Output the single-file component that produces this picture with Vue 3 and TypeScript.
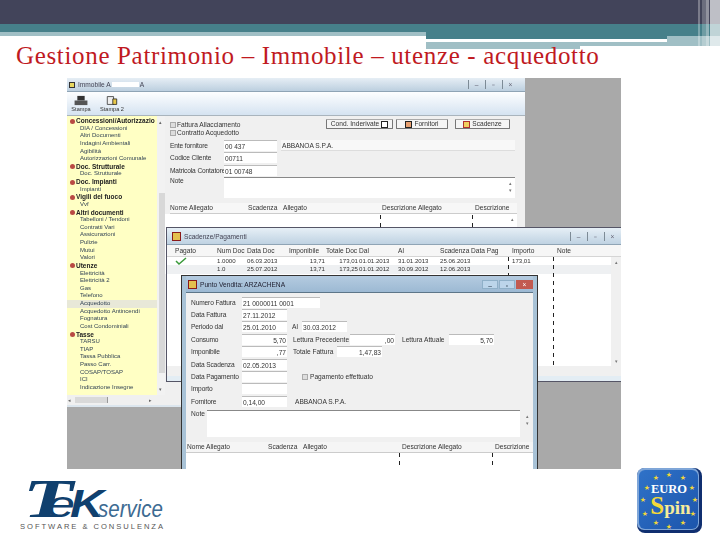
<template>
  <div class="slide">
    <header class="banner">
      <div class="band-dark"></div>
      <div class="band-left"></div>
      <div class="band-right"></div>
      <div class="white-line"></div>
      <div class="pale-a"></div>
      <div class="pale-b"></div>
      <div class="pale-c"></div>
      <div class="stripes"><i></i><i></i><i></i><i></i></div>
    </header>

    <h1 class="title">Gestione Patrimonio – Immobile – utenze - acquedotto</h1>

    <div class="shot">
      <!-- finestra principale -->
      <section class="win main-win">
        <div class="titlebar">
          <span class="lock"></span>
          <span class="t-text">Immobile A<b class="redact"></b>A</span>
          <span class="controls plain"><i>–</i><i>▫</i><i>×</i></span>
        </div>
        <div class="toolbar">
          <div class="tool">
            <svg width="16" height="12" viewBox="0 0 16 12"><path d="M4 1h8v5H4z" fill="#333" /><path d="M1 6h14v5H1z" fill="#555" /></svg>
            <span>Stampa</span>
          </div>
          <div class="tool">
            <svg width="16" height="14" viewBox="0 0 16 14"><path d="M2 2h8v10H2z" fill="#eee" stroke="#333" /><path d="M9 5h5v7H9z" fill="#e8c84a" stroke="#222" /></svg>
            <span>Stampa 2</span>
          </div>
        </div>
        <div class="main-body">
          <aside class="tree">
            <div v-for="(n, i) in tree" :key="i" :class="n.head ? 'tree-head' : 'tree-leaf'" :data-on="n.on">
              <span v-if="n.head" class="bullet"></span>{{ n.label }}
            </div>
          </aside>
          <div class="vscroll"><span>▴</span><b></b><span>▾</span></div>
          <div class="form">
            <div class="top-row">
              <div class="checks">
                <label><i class="cb"></i>Fattura Allacciamento</label>
                <label><i class="cb"></i>Contratto Acquedotto</label>
              </div>
              <div class="btns">
                <span class="btn b1">Cond. Inderivate <i class="ic ic-w"></i></span>
                <span class="btn b2"><i class="ic ic-o"></i> Fornitori</span>
                <span class="btn b3"><i class="ic ic-r"></i> Scadenze</span>
              </div>
            </div>
            <div class="frow"><span class="lbl">Ente fornitore</span><span class="inp w53">00 437</span><span class="inp grow">ABBANOA S.P.A.</span></div>
            <div class="frow"><span class="lbl">Codice Cliente</span><span class="inp w53">00711</span></div>
            <div class="frow"><span class="lbl">Matricola Contatore</span><span class="inp w53">01 00748</span></div>
            <div class="frow note"><span class="lbl">Note</span><span class="inp ta"><em>▴<br>▾</em></span></div>
            <div class="thead">
              <span class="w1">Nome Allegato</span><span class="w2">Scadenza</span><span class="w3">Allegato</span><span class="w4">Descrizione Allegato</span><span>Descrizione</span>
            </div>
            <div class="grid-white">
              <i class="dash g1"></i>
              <i class="dash g2"></i>
              <em>▴</em>
            </div>
          </div>
        </div>
        <div class="bottom-scroll"><span>◂</span><b></b><span>▸</span></div>
      </section>

      <!-- scadenze -->
      <section class="win pay-win">
        <div class="titlebar">
          <span class="ico"></span>
          <span class="t-text">Scadenze/Pagamenti</span>
          <span class="controls plain"><i>–</i><i>▫</i><i>×</i></span>
        </div>
        <div class="pay-body">
          <div class="pay-head">
            <span v-for="c in payCols" :key="c.t" :style="{ width: c.w + 'px' }">{{ c.t }}</span>
          </div>
          <div v-for="(r, i) in payRows" :key="i" class="pay-row">
            <span v-for="(c, j) in payCols" :key="c.t" :class="{ num: c.num }" :style="{ width: c.w + 'px' }">{{ r[j] }}</span>
          </div>
          <svg class="check" width="12" height="9" viewBox="0 0 12 9"><path d="M1 4l3 3 7-6" fill="none" stroke="#3a9a3a" stroke-width="1.5" /></svg>
          <i class="dash d1"></i>
          <i class="dash d2"></i>
          <div class="pay-scroll"><span>▴</span><span>▾</span></div>
        </div>
        <div class="pay-bottom"></div>
      </section>

      <!-- fattura -->
      <section class="win inv-win">
        <div class="titlebar blue">
          <span class="ico"></span>
          <span class="t-text">Punto Vendita: ARZACHENA</span>
          <span class="controls"><i class="c1">–</i><i class="c2">▫</i><i class="c3">×</i></span>
        </div>
        <div class="inv-body">
          <div class="irow"><span class="lbl">Numero Fattura</span><span class="inp w78">21 0000011 0001</span></div>
          <div class="irow"><span class="lbl">Data Fattura</span><span class="inp w45">27.11.2012</span></div>
          <div class="irow"><span class="lbl">Periodo dal</span><span class="inp w45">25.01.2010</span><span class="mid l1">Al</span><span class="inp w45">30.03.2012</span></div>
          <div class="irow"><span class="lbl">Consumo</span><span class="inp w45 r">5,70</span><span class="mid l2">Lettura Precedente</span><span class="inp w45 r">,00</span><span class="mid l3">Lettura Attuale</span><span class="inp w45 r">5,70</span></div>
          <div class="irow"><span class="lbl">Imponibile</span><span class="inp w45 r">,77</span><span class="mid l4">Totale Fattura</span><span class="inp w45 r">1,47,83</span></div>
          <div class="irow"><span class="lbl">Data Scadenza</span><span class="inp w45">02.05.2013</span></div>
          <div class="irow"><span class="lbl">Data Pagamento</span><span class="inp w45"></span><label class="mid l5"><i class="cb"></i>Pagamento effettuato</label></div>
          <div class="irow"><span class="lbl">Importo</span><span class="inp w45"></span></div>
          <div class="irow"><span class="lbl">Fornitore</span><span class="inp w45">0,14,00</span><span class="mid l6">ABBANOA S.P.A.</span></div>
          <div class="irow inote"><span class="lbl-n">Note</span><span class="inp ta"><em>▴<br>▾</em></span></div>
          <div class="thead inv-head">
            <span class="i1">Nome Allegato</span><span class="i2">Scadenza</span><span class="i3">Allegato</span><span class="i4">Descrizione Allegato</span><span>Descrizione</span>
          </div>
          <i class="dash d3"></i>
          <i class="dash d4"></i>
        </div>
      </section>
    </div>

    <footer class="logos">
      <svg class="tek" width="150" height="60" viewBox="0 0 150 60">
        <text x="6" y="41" class="tek-t" textLength="50" lengthAdjust="spacingAndGlyphs">T</text>
        <text x="30" y="41" class="tek-e" textLength="28" lengthAdjust="spacingAndGlyphs">e</text>
        <text x="53" y="41" class="tek-k" textLength="34" lengthAdjust="spacingAndGlyphs">K</text>
        <text x="81" y="41" class="tek-s" textLength="65" lengthAdjust="spacingAndGlyphs">service</text>
        <text x="3" y="53" class="tek-c" textLength="143">SOFTWARE &amp; CONSULENZA</text>
      </svg>
      <svg class="euro" width="66" height="66" viewBox="0 0 66 66">
        <defs>
          <linearGradient id="eb" x1="0" y1="0" x2="1" y2="1">
            <stop offset="0" stop-color="#2f72c8" />
            <stop offset="1" stop-color="#1c55ac" />
          </linearGradient>
        </defs>
        <rect x="0" y="0" width="65" height="65" rx="8" fill="#102f70" />
        <rect x="0" y="0" width="62" height="62" rx="7" fill="#7fa6d8" />
        <rect x="2" y="2" width="59" height="59" rx="6" fill="url(#eb)" />
        <text v-for="(s, i) in stars" :key="i" :x="s[0]" :y="s[1]" class="star">★</text>
        <text x="32" y="25" class="e-euro">EURO</text>
        <text x="33.5" y="46" class="e-spin"><tspan class="e-s">S</tspan>pin</text>
      </svg>
    </footer>
  </div>
</template>

<script setup lang="ts">
type TreeNode = { label: string; head?: boolean; on?: boolean }

const tree: TreeNode[] = [
  { label: 'Concessioni/Autorizzazio', head: true },
  { label: 'DIA / Concessioni' },
  { label: 'Altri Documenti' },
  { label: 'Indagini Ambientali' },
  { label: 'Agibilità' },
  { label: 'Autorizzazioni Comunale' },
  { label: 'Doc. Strutturale', head: true },
  { label: 'Doc. Strutturale' },
  { label: 'Doc. Impianti', head: true },
  { label: 'Impianti' },
  { label: 'Vigili del fuoco', head: true },
  { label: 'Vvf' },
  { label: 'Altri documenti', head: true },
  { label: 'Tabelloni / Tendoni' },
  { label: 'Contratti Vari' },
  { label: 'Assicurazioni' },
  { label: 'Pulizie' },
  { label: 'Mutui' },
  { label: 'Valori' },
  { label: 'Utenze', head: true },
  { label: 'Elettricità' },
  { label: 'Elettricità 2' },
  { label: 'Gas' },
  { label: 'Telefono' },
  { label: 'Acquedotto', on: true },
  { label: 'Acquedotto Antincendi' },
  { label: 'Fognatura' },
  { label: 'Cost Condominiali' },
  { label: 'Tasse', head: true },
  { label: 'TARSU' },
  { label: 'TIAP' },
  { label: 'Tassa Pubblica' },
  { label: 'Passo Carr.' },
  { label: 'COSAP/TOSAP' },
  { label: 'ICI' },
  { label: 'Indicazione Insegne' },
]

const payCols = [
  { t: 'Pagato', w: 42 },
  { t: 'Num Doc', w: 30 },
  { t: 'Data Doc', w: 42 },
  { t: 'Imponibile', w: 37, num: true },
  { t: 'Totale Doc', w: 33, num: true },
  { t: 'Dal', w: 39 },
  { t: 'Al', w: 42 },
  { t: 'Scadenza', w: 31 },
  { t: 'Data Pag', w: 41 },
  { t: 'Importo', w: 45 },
  { t: 'Note', w: 40 },
]
const payRows = [
  ['', '1.0000', '06.03.2013', '13,71', '173,01', '01.01.2013', '31.01.2013', '25.06.2013', '', '173,01', ''],
  ['', '1.0', '25.07.2012', '13,71', '173,25', '01.01.2012', '30.09.2012', '12.06.2013', '', '', ''],
]

const stars: number[][] = [
  [32, 9], [19, 12], [46, 12], [10, 22], [55, 22], [6, 34], [58, 34], [8, 48], [56, 48], [19, 57], [46, 57], [32, 61],
]
</script>

<style>
html, body { margin: 0; background: #fff; }
</style>

<style scoped>
.slide {
  width: 720px;
  height: 540px;
  position: relative;
  overflow: hidden;
  background: #fff;
  font-family: "Liberation Sans", sans-serif;
}

.banner { position: absolute; inset: 0 0 auto 0; height: 50px; }
.banner div { position: absolute; }
.band-dark { left: 0; right: 0; top: 0; height: 24px; background: #42445a; }
.band-left { left: 0; width: 426px; top: 24px; height: 12px; background: linear-gradient(#46808a 0 8px, #a0bfc5 8px); }
.band-right { left: 426px; right: 0; top: 24px; height: 15px; background: #46808a; }
.white-line { left: 426px; width: 241px; top: 39px; height: 3px; background: #fff; }
.pale-a { left: 426px; width: 154px; top: 42px; height: 7px; background: #a0bfc5; }
.pale-b { left: 580px; width: 87px; top: 42px; height: 4px; background: #a0bfc5; }
.pale-c { left: 667px; right: 0; top: 36px; height: 10px; background: #a0bfc5; }
.stripes { left: 698px; right: 0; top: 0; height: 49px; display: flex; }
.stripes i { display: block; }
.stripes i:nth-child(1) { width: 2px; background: rgba(255, 255, 255, 0.3); }
.stripes i:nth-child(2) { width: 4px; background: rgba(255, 255, 255, 0.22); margin-left: 2px; }
.stripes i:nth-child(3) { width: 3px; background: rgba(255, 255, 255, 0.42); }
.stripes i:nth-child(4) { width: 10px; background: rgba(255, 255, 255, 0.66); margin-left: 1px; }

.title {
  position: absolute;
  left: 16px;
  top: 42px;
  margin: 0;
  font: 400 25px/28px "Liberation Serif", serif;
  letter-spacing: 0.66px;
  color: #c01a1f;
  white-space: nowrap;
}

.shot {
  position: absolute;
  left: 67px;
  top: 78px;
  width: 554px;
  height: 391px;
  background: #a9a9a9;
  overflow: hidden;
  font-size: 6.6px;
  color: #333;
  filter: blur(0.3px);
}
.win { position: absolute; background: #f0f0f0; display: flex; flex-direction: column; overflow: hidden; }
.titlebar {
  display: flex;
  align-items: center;
  gap: 3px;
  flex: none;
  background: linear-gradient(#e6eef5, #bccfdf);
  border-bottom: 1px solid #8fa4b5;
  color: #445;
  box-sizing: border-box;
}
.titlebar.blue { background: linear-gradient(#b4cbe0, #9cb9d3); border-bottom: 1px solid #5d7689; }
.t-text { white-space: nowrap; }
.redact { display: inline-block; width: 27px; height: 5px; background: #fff; margin: 0 1px; }
.controls { margin-left: auto; display: flex; gap: 1px; }
.controls i { font-style: normal; width: 15px; height: 9px; line-height: 9px; text-align: center; }
.controls.plain i { border-left: 1px solid #7d8b96; color: #667; }
.controls .c1, .controls .c2 { background: #bcd5ea; color: #234; border: 1px solid #8fb0c8; box-sizing: border-box; width: 16px; }
.controls .c3 { background: #c25a50; color: #fff; width: 17px; }

.main-win { left: 0; top: 0; width: 458px; height: 329px; }
.main-win .titlebar { height: 14px; padding: 0 7px 0 2px; }
.lock { width: 6px; height: 6px; background: #e8d860; border: 1px solid #333; box-sizing: border-box; }
.toolbar {
  flex: none;
  height: 24px;
  display: flex;
  gap: 9px;
  padding: 3px 0 0 3px;
  box-sizing: border-box;
  background: linear-gradient(#fdfeff, #d5e3f1);
  border-bottom: 1px solid #a9b4bd;
}
.tool { display: flex; flex-direction: column; align-items: center; font-size: 5.6px; line-height: 6px; width: 22px; white-space: nowrap; }
.tool svg { height: 11px; }

.main-body { flex: 1; display: flex; min-height: 0; }
.tree {
  width: 90px;
  flex: none;
  background: #ffffc4;
  padding: 1px 0 0 3px;
  box-sizing: border-box;
  white-space: nowrap;
  overflow: hidden;
}
.tree-head, .tree-leaf { height: 7.63px; line-height: 7.63px; }
.tree-head { font-weight: 700; color: #222; font-size: 6.5px; }
.tree-leaf { padding-left: 10px; color: #345; font-size: 6px; }
.tree-leaf[data-on="true"] { background: #e8e8d8; margin-left: -3px; padding-left: 13px; }
.bullet { display: inline-block; width: 5px; height: 5px; margin-right: 1px; border-radius: 50%; background: #b94a44; vertical-align: -0.5px; }
.vscroll { width: 8px; flex: none; background: #f2f2f2; position: relative; font-size: 5px; color: #666; }
.vscroll span:first-child { position: absolute; top: 3px; left: 2px; }
.vscroll span:last-child { position: absolute; top: 270px; left: 2px; }
.vscroll b { position: absolute; left: 2px; top: 77px; width: 6px; height: 180px; background: #d8d8d8; }
.bottom-scroll {
  flex: none;
  height: 12px;
  background: #f0f0f0;
  display: flex;
  align-items: flex-start;
  padding: 2px 0 0 1px;
  box-sizing: border-box;
  font-size: 5px;
  line-height: 6px;
  color: #666;
  border-bottom: 2px solid #dce6ee;
}
.bottom-scroll b { width: 33px; height: 6px; margin: 0 41px 0 4px; background: #d9d9d9; border-right: 1px solid #999; box-sizing: border-box; }

.form { flex: 1; padding: 3px 10px 0 5px; min-width: 0; overflow: hidden; }
.top-row { display: flex; justify-content: space-between; height: 20px; }
.checks { display: flex; flex-direction: column; line-height: 8px; padding-top: 2px; white-space: nowrap; }
.checks label { display: flex; align-items: center; gap: 1px; }
.cb { display: inline-block; width: 6px; height: 6px; background: #ddd; border: 1px solid #aaa; box-sizing: border-box; flex: none; }
.btns { display: flex; gap: 3px; padding: 0 5px 0 0; }
.btn {
  height: 10px;
  line-height: 10px;
  border: 1px solid #777;
  border-top-color: #aaa;
  background: #f5f5f5;
  border-radius: 1px;
  white-space: nowrap;
  display: inline-flex;
  align-items: center;
  justify-content: center;
  gap: 2px;
  box-sizing: border-box;
}
.b1 { width: 67px; }
.b2 { width: 52px; }
.b3 { width: 55px; margin-left: 4px; }
.ic { display: inline-block; width: 7px; height: 7px; border: 1px solid #222; box-sizing: border-box; }
.ic-w { background: #fff; }
.ic-o { background: #e8a070; }
.ic-r { background: #f0d060; border-color: #b03030; }
.frow { display: flex; gap: 4px; align-items: center; height: 12.5px; white-space: nowrap; }
.lbl { width: 50px; flex: none; white-space: nowrap; letter-spacing: -0.12px; }
.inp {
  display: block;
  background: #fff;
  height: 11px;
  line-height: 11px;
  padding: 0 1px;
  box-sizing: border-box;
  border-top: 1px solid #bbb;
  white-space: nowrap;
  overflow: hidden;
}
.w53 { width: 53px; }
.grow { flex: 1; border-top: 0; border-bottom: 1px solid #ddd; background: #f8f8f8; }
.note { height: 24px; align-items: flex-start; }
.ta { flex: 1; height: 21px; border-top: 1px solid #888; position: relative; overflow: visible; }
.ta em { position: absolute; right: 3px; top: 2px; font-style: normal; font-size: 5px; line-height: 7px; color: #777; }
.thead {
  display: flex;
  height: 10px;
  line-height: 10px;
  background: #f7f7f7;
  border-bottom: 1px solid #ccc;
  white-space: nowrap;
  margin: 2.5px -2px 0 0;
  box-sizing: content-box;
}
.w1 { width: 78px; }
.w2 { width: 35px; }
.w3 { width: 99px; }
.w4 { width: 93px; }
.grid-white { position: relative; height: 60px; margin-right: -2px; margin-left: -5px; background: #fff; font-size: 5px; color: #777; }
.grid-white em { position: absolute; right: 3px; top: 2px; font-style: normal; }

.dash { position: absolute; width: 1px; background: repeating-linear-gradient(#222 0 4px, transparent 4px 8px); }
.g1 { left: 215px; top: 1px; height: 13px; }
.g2 { left: 307px; top: 1px; height: 13px; }

.pay-win { left: 100px; top: 150px; width: 454px; height: 153px; box-shadow: 0 0 0 1px #556; }
.pay-win .titlebar { height: 17px; padding: 0 1px 0 5px; background: linear-gradient(#e6eff6, #bfd2e2); }
.ico { width: 9px; height: 9px; background: #e4c04e; border: 1px solid #8a1a1a; box-sizing: border-box; flex: none; }
.pay-body { flex: 1; background: #fff; position: relative; padding-left: 8px; overflow: hidden; min-height: 0; }
.pay-head, .pay-row { display: flex; white-space: nowrap; }
.pay-head { height: 11px; line-height: 11px; background: #f6f6f6; border-bottom: 1px solid #d5d5d5; margin-left: -8px; padding-left: 8px; }
.pay-row { height: 8.4px; line-height: 8.4px; font-size: 6.1px; overflow: hidden; margin-left: -8px; padding-left: 8px; }
.pay-row:nth-child(3) { background: #eef0f2; }
.pay-head span, .pay-row span { flex: none; overflow: hidden; }
.num { text-align: right; padding-right: 1px; box-sizing: border-box; }
.check { position: absolute; left: 8px; top: 12px; }
.d1 { left: 341px; top: 12px; height: 108px; }
.d2 { left: 386px; top: 12px; height: 108px; }
.pay-scroll {
  position: absolute;
  right: 0;
  top: 12px;
  bottom: 0;
  width: 10px;
  background: #f0f0f0;
  font-size: 5px;
  color: #777;
  display: flex;
  flex-direction: column;
  justify-content: space-between;
  align-items: center;
  padding: 2px 0;
  box-sizing: border-box;
}
.pay-bottom { height: 15px; background: #f0f0f0; flex: none; border-bottom: 5px solid #e3edf4; box-sizing: border-box; }

.inv-win {
  left: 115px;
  top: 198px;
  width: 355px;
  height: 193px;
  box-shadow: 0 0 0 1px #333;
  border-left: 4px solid #a8c2d6;
  border-right: 4px solid #a8c2d6;
  box-sizing: border-box;
}
.inv-win .titlebar { height: 17px; color: #223; margin: 0 -4px; padding: 0 4px 0 6px; }
.inv-body { flex: 1; position: relative; padding: 3px 0 0 5px; overflow: hidden; min-height: 0; }
.irow { display: flex; align-items: center; height: 12.4px; white-space: nowrap; }
.inv-body .lbl { width: 51px; }
.w78 { width: 78px; }
.w45 { width: 45px; }
.r { text-align: right; }
.mid { flex: none; display: inline-flex; align-items: center; gap: 2px; box-sizing: border-box; white-space: nowrap; }
.l1 { width: 15px; padding-left: 5px; }
.l2 { width: 63px; padding-left: 6px; }
.l3 { width: 54px; padding-left: 7px; }
.l4 { width: 50px; padding-left: 6px; }
.l5 { padding-left: 15px; }
.l6 { padding-left: 8px; }
.inote { height: 27px; align-items: flex-start; margin-top: 2px; }
.lbl-n { width: 16px; flex: none; }
.inote .ta { height: 27px; border-top: 1px solid #888; margin-right: 13px; }
.inote .ta em { right: -9px; }
.inv-head { margin: 5px 0 0 -5px; background: #f5f5f5; height: 10px; padding-left: 1px; }
.i1 { width: 81px; }
.i2 { width: 35px; }
.i3 { width: 99px; }
.i4 { width: 93px; }
.inv-body::after { content: ""; position: absolute; left: 0; right: 0; top: 160px; height: 40px; background: #fff; }
.d3 { left: 213px; top: 160px; height: 16px; z-index: 1; }
.d4 { left: 306px; top: 160px; height: 16px; z-index: 1; }

.logos { position: absolute; inset: 468px 0 0 0; }
.tek { position: absolute; left: 17px; top: 8px; }
.tek-t { font: italic 700 54px "Liberation Serif", serif; fill: #10406e; }
.tek-e { font: italic 400 36px "Liberation Sans", sans-serif; fill: #10406e; }
.tek-k { font: italic 700 39px "Liberation Sans", sans-serif; fill: #10406e; }
.tek-s { font: italic 400 23px "Liberation Sans", sans-serif; fill: #3d6b92; }
.tek-c { font: 400 7.6px "Liberation Sans", sans-serif; fill: #555; }
.euro { position: absolute; left: 637px; top: 0; }
.star { font: 7px "DejaVu Sans", sans-serif; fill: #f0d63c; text-anchor: middle; }
.e-euro { font: 700 12.5px "Liberation Serif", serif; fill: #fff; text-anchor: middle; }
.e-spin { font: 700 19px "Liberation Serif", serif; fill: #f6ec9a; text-anchor: middle; }
.e-s { font-size: 25px; fill: #f4d93a; }
</style>
